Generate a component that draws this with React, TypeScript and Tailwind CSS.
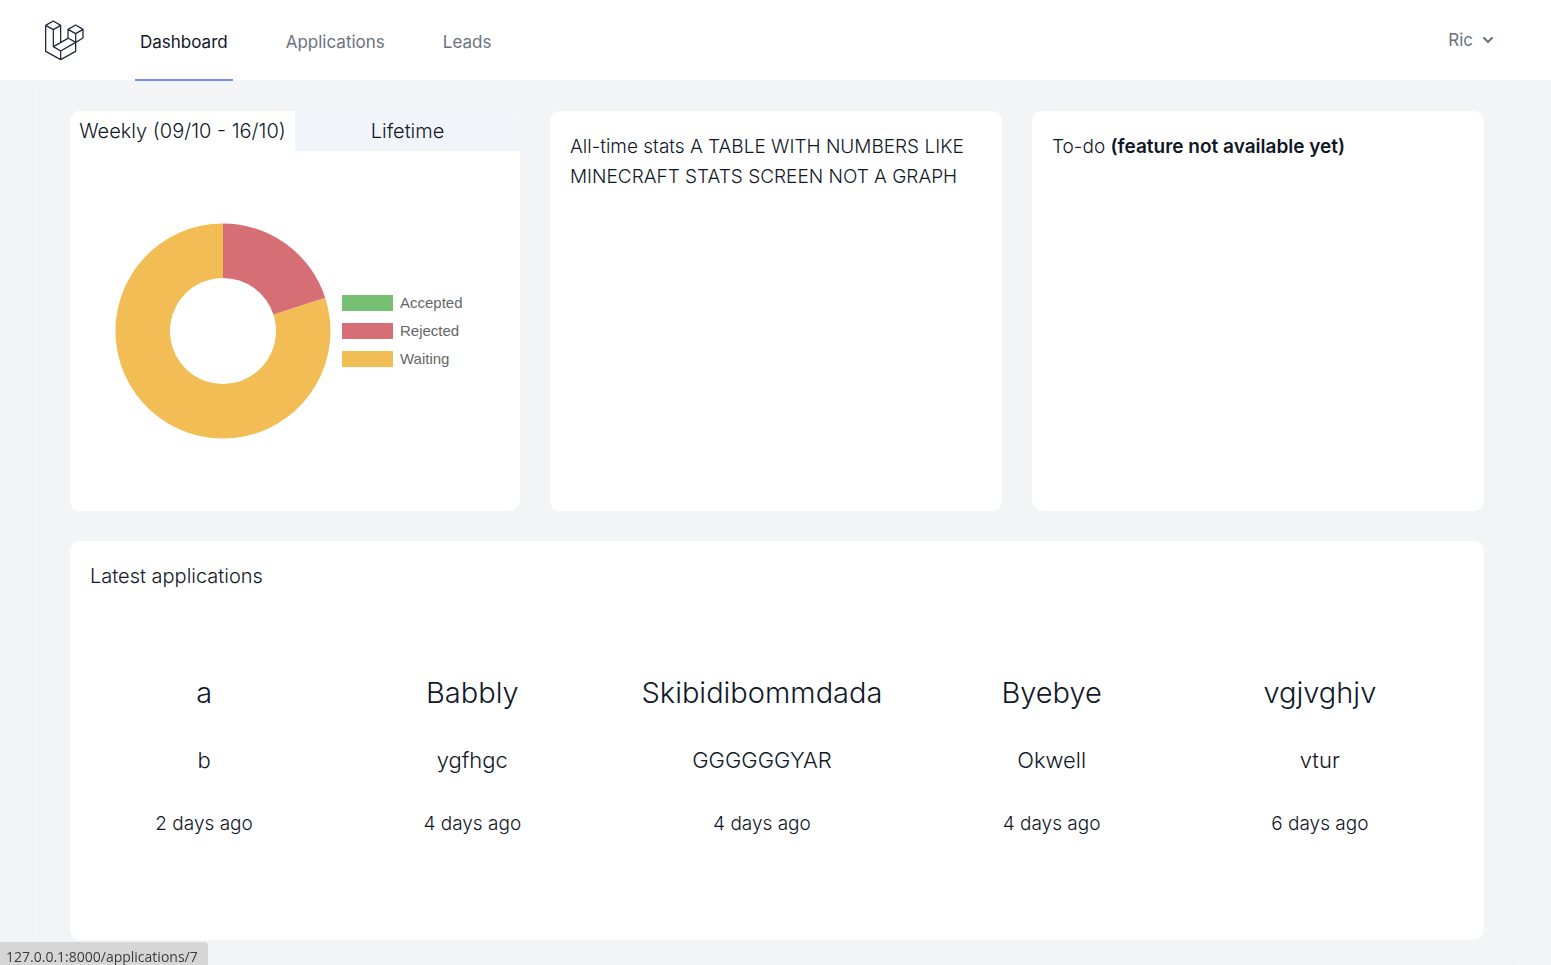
import { useState } from "react";

const links = ["Dashboard", "Applications", "Leads"];

const legend = [
  { label: "Accepted", color: "bg-[#75c072]" },
  { label: "Rejected", color: "bg-[#d66e75]" },
  { label: "Waiting", color: "bg-[#f2bd54]" },
];

const applications = [
  { id: 11, name: "a", role: "b", age: "2 days ago" },
  { id: 10, name: "Babbly", role: "ygfhgc", age: "4 days ago" },
  { id: 9, name: "Skibidibommdada", role: "GGGGGGYAR", age: "4 days ago" },
  { id: 8, name: "Byebye", role: "Okwell", age: "4 days ago" },
  { id: 7, name: "vgjvghjv", role: "vtur", age: "6 days ago" },
];

function Logo() {
  return (
    <svg viewBox="42 30 120 123" className="h-[41px] w-10" fill="none" stroke="#1f2937" strokeWidth="3.8" strokeLinejoin="round" aria-hidden="true">
      <path d="M47 46L70 33L92 46V98M47 46L70 59L92 46M47 46V124L92 149L137 124V97M70 59V110L92 123L137 97M70 110L114 85M92 123V149" />
      <path d="M114 58L137 45L159 58V84L137 97L114 84ZM114 58L137 71L159 58M137 71V97" />
    </svg>
  );
}

function Doughnut() {
  return (
    <svg viewBox="-108 -108 216 216" className="size-[216px]" role="img" aria-label="Applications by status">
      <path fill="#f2bd54" d="M102.2-33.2A107.5 107.5 0 1 1 0-107.5V-53A53 53 0 1 0 50.4-16.4Z" />
      <path fill="#d66e75" d="M0-107.5A107.5 107.5 0 0 1 102.2-33.2L50.4-16.4A53 53 0 0 0 0-53Z" />
    </svg>
  );
}

export default function App() {
  const [tab, setTab] = useState(0);
  return (
    <div className="min-h-screen bg-gray-100 font-['Inter',sans-serif] text-[19px] leading-[30px] font-light text-gray-900">
      <header className="flex h-20 items-start justify-between bg-white pr-[53px] pl-11">
        <div className="flex items-start">
          <a href="#" aria-label="Home" className="mt-5">
            <Logo />
          </a>
          <nav className="ml-[51px] flex gap-12 text-[17px] font-normal">
            {links.map((link, i) => (
              <a
                key={link}
                href="#"
                className={
                  i === 0
                    ? "flex h-[81px] items-center border-b-2 border-indigo-400 px-[5px] pt-[5px] text-gray-900"
                    : "flex h-[81px] items-center border-b-2 border-transparent px-[5px] pt-[5px] text-gray-500"
                }
              >
                {link}
              </a>
            ))}
          </nav>
        </div>
        <button className="flex h-20 items-center gap-[5px] text-[17px] font-normal text-gray-500">
          Ric
          <svg viewBox="0 0 20 20" className="size-5" fill="currentColor" aria-hidden="true">
            <path fillRule="evenodd" clipRule="evenodd" d="M5.293 7.293a1 1 0 011.414 0L10 10.586l3.293-3.293a1 1 0 111.414 1.414l-4 4a1 1 0 01-1.414 0l-4-4a1 1 0 010-1.414z" />
          </svg>
        </button>
      </header>

      <main className="mr-[37px] ml-10 rounded-[10px] px-[30px] pt-[31px] pb-[30px] shadow-xs">
        <div className="grid grid-cols-[450fr_452fr_452fr] gap-[30px]">
          <section className="flex h-[400px] flex-col overflow-hidden rounded-[10px] bg-white">
            <div className="grid grid-cols-2 text-xl">
              {["Weekly (09/10 - 16/10)", "Lifetime"].map((label, i) => (
                <button
                  key={label}
                  onClick={() => setTab(i)}
                  className={i === tab ? "h-10 bg-white whitespace-nowrap" : "h-10 bg-slate-100 whitespace-nowrap"}
                >
                  {label}
                </button>
              ))}
            </div>
            <div className="flex flex-1 items-center gap-[11px] pl-[45px]">
              <Doughnut />
              <ul className="flex flex-col gap-3 font-['Liberation_Sans',sans-serif] text-[15px] leading-4 font-normal text-[#666666]">
                {legend.map((item) => (
                  <li key={item.label} className="flex items-center gap-[7px]">
                    <span className={`h-4 w-[51px] ${item.color}`} />
                    {item.label}
                  </li>
                ))}
              </ul>
            </div>
          </section>
          <section className="h-[400px] rounded-[10px] bg-white px-5 py-[21px]">
            All-time stats A TABLE WITH NUMBERS LIKE MINECRAFT STATS SCREEN NOT A GRAPH
          </section>
          <section className="h-[400px] rounded-[10px] bg-white px-5 py-[21px]">
            To-do <strong className="font-semibold">(feature not available yet)</strong>
          </section>
        </div>

        <section className="mt-[30px] h-[399px] rounded-[10px] bg-white pt-5">
          <h2 className="pl-5 text-xl leading-[30px]">Latest applications</h2>
          <div className="mt-[79px] mr-[30px] flex justify-around text-center">
            {applications.map((app) => (
              <a key={app.id} href={`/applications/${app.id}`} className="block min-w-[198px]">
                <h3 className="text-[29px] leading-[45px]">{app.name}</h3>
                <p className="mt-7 text-[22px] leading-[35px]">{app.role}</p>
                <p className="mt-[31px]">{app.age}</p>
              </a>
            ))}
          </div>
        </section>
      </main>

      <div className="fixed bottom-0 left-0 h-[23px] rounded-tr-[4px] bg-[#d6d6d6] pr-[10px] pl-[6px] font-['Open_Sans','Noto_Sans',sans-serif] text-sm leading-[30px] font-normal text-[#3c3c3c]">
        127.0.0.1:8000/applications/7
      </div>
    </div>
  );
}
